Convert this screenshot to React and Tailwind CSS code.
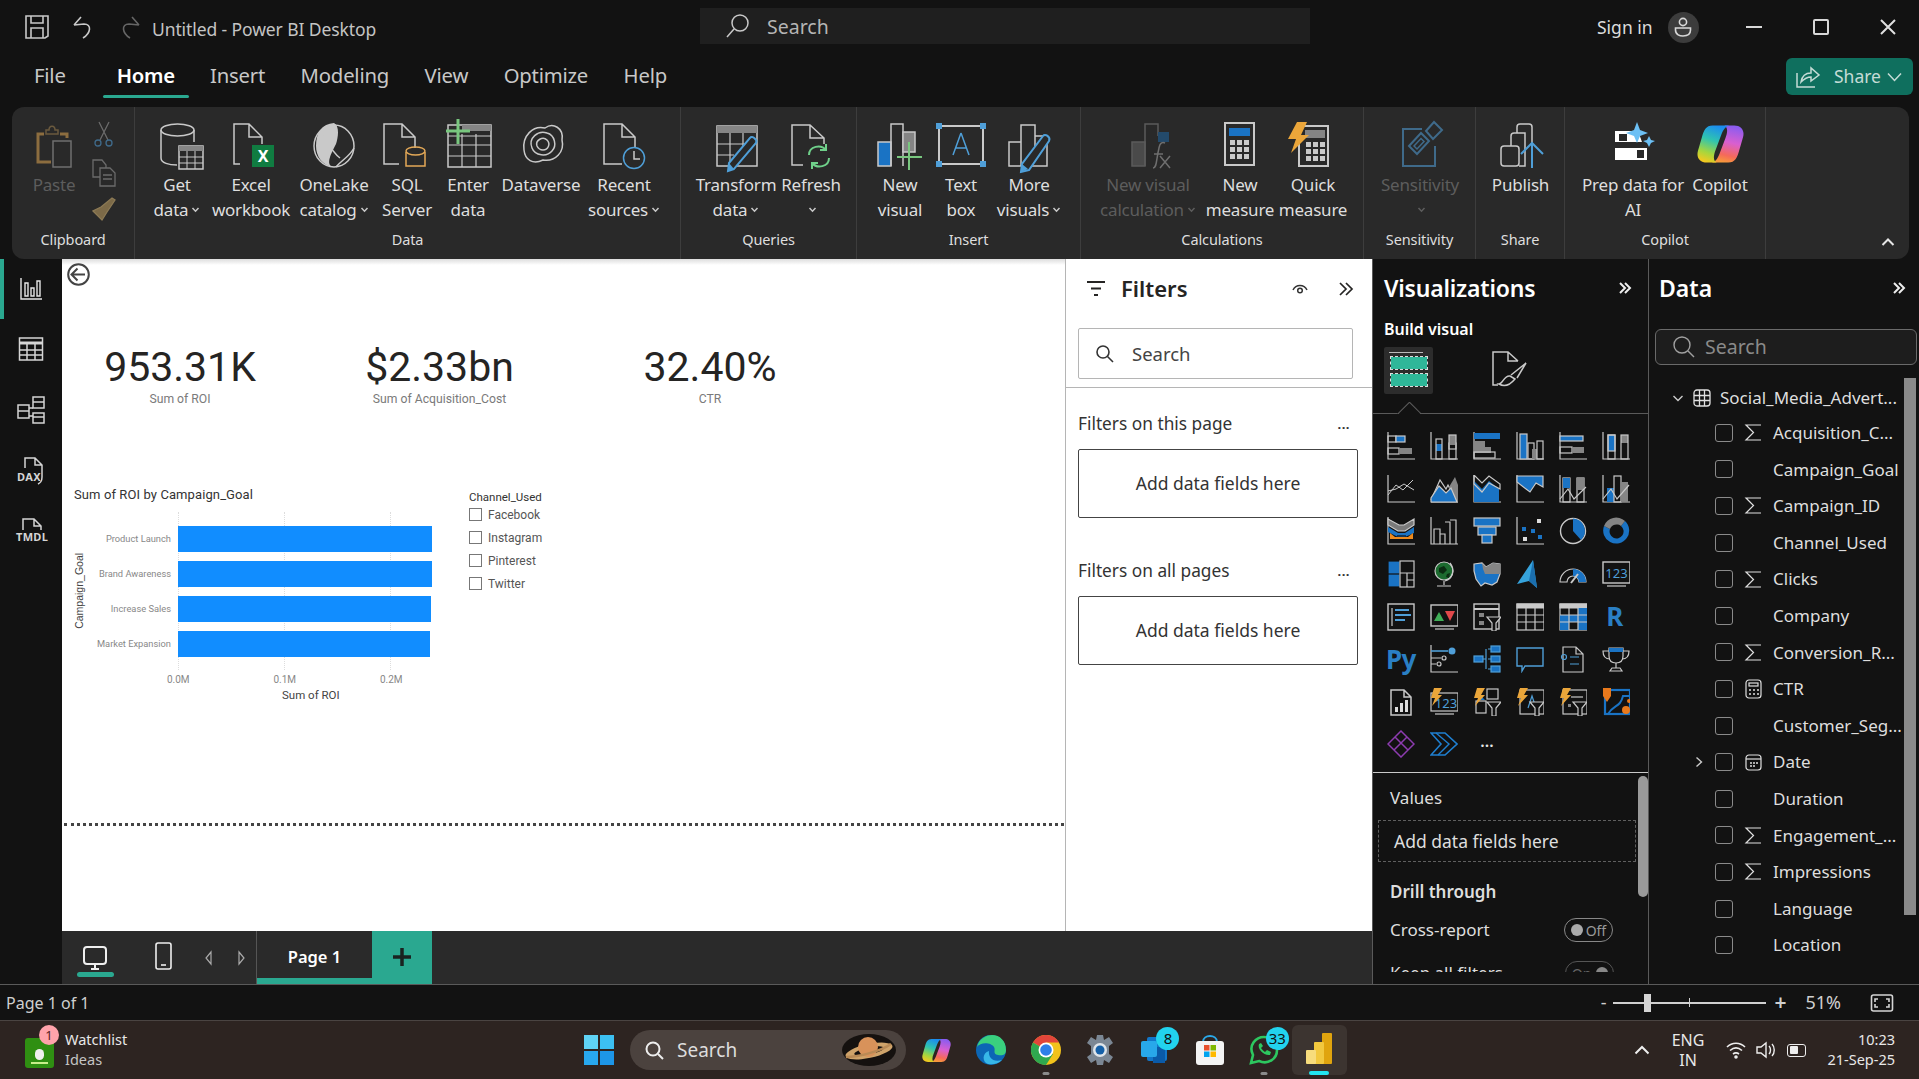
const W = "#c9c9c9";
const B = "#1a73c4";
const G = "#858585";
const L = "#4f9fd8";

function Ico({ s = 44, vb, children, sw = 1.5, stroke = W, className = "" }) {
  return (
    <svg width={s} height={s} viewBox={vb || `0 0 ${s} ${s}`} fill="none" stroke={stroke} strokeWidth={sw} className={"overflow-visible shrink-0 " + className}>
      {children}
    </svg>
  );
}

function Chev({ color = "#c9c9c9", s = 9 }) {
  return (
    <svg width={s} height={s} viewBox="0 0 9 9" fill="none" stroke={color} strokeWidth="1.5" className="inline-block ml-[3px] shrink-0">
      <path d="M1.5 3 4.5 6.2 7.5 3" />
    </svg>
  );
}

function CopilotLogo({ id, w = 47, h = 40 }) {
  return (
    <svg width={w} height={h} viewBox="0 0 48 40" className="shrink-0">
      <defs>
        <linearGradient id={id + "a"} x1="0.6" y1="0" x2="0.3" y2="1">
          <stop offset="0" stopColor="#1b8cf0" />
          <stop offset="0.4" stopColor="#2fc4b0" />
          <stop offset="0.75" stopColor="#a6d63e" />
          <stop offset="1" stopColor="#f5c91f" />
        </linearGradient>
        <linearGradient id={id + "b"} x1="0.6" y1="0" x2="0.4" y2="1">
          <stop offset="0" stopColor="#8a5cf0" />
          <stop offset="0.45" stopColor="#d95fd0" />
          <stop offset="0.8" stopColor="#f56a5a" />
          <stop offset="1" stopColor="#f79a3a" />
        </linearGradient>
      </defs>
      <path fill={`url(#${id}b)`} d="M32 39C39 39 41 34 43 27L47 13C49 6 45 1 38 1H28C32 3 31 9 29 14L23 30C21 35 19 38 15 39Z" />
      <path fill={`url(#${id}a)`} d="M16 1C9 1 7 6 5 13L1 27C-1 34 3 39 10 39H20C16 37 17 31 19 26L25 10C27 5 29 2 33 1Z" />
    </svg>
  );
}

const RI = {
  paste: (
    <Ico stroke="#8c6d3f" sw={3}>
      <path d="M19 40H6V12H12 M28 12H35V16" />
      <path d="M14 12V8H17C17 3 23 3 23 8H26V12Z" stroke="#6b5a3e" strokeWidth="1.5" />
      <rect x="21" y="19" width="18" height="26" stroke="#6f6f6f" strokeWidth="1.5" />
    </Ico>
  ),
  getdata: (
    <Ico>
      <path d="M6 8V36C6 41 14 43 22 43 M39 8V20" />
      <ellipse cx="22.5" cy="8" rx="16.5" ry="6" />
      <rect x="24" y="24" width="24" height="23" fill="#292929" />
      <rect x="24" y="24" width="24" height="5" fill={G} stroke="none" />
      <path d="M24 35H48M24 41H48M32 29V47M40 29V47" strokeWidth="1" />
    </Ico>
  ),
  excel: (
    <Ico>
      <path d="M11 42H5V2H20L33 15V22 M20 2V15H33" />
      <rect x="23" y="23" width="22" height="22" fill="#107c41" stroke="none" />
      <text x="34" y="40" textAnchor="middle" fontSize="16" fontWeight="700" fill="#fff" stroke="none">X</text>
    </Ico>
  ),
  onelake: (
    <Ico>
      <ellipse cx="22" cy="24" rx="20" ry="21" fill="#292929" />
      <path d="M4 24C4 10 10 2 22 1C28 4 26 16 24 22C20 30 12 44 22 45C10 44 4 34 4 24Z" fill="#c9c9c9" stroke="none" />
      <path d="M10 12C14 18 20 30 28 36 M42 26C38 34 30 38 24 45" />
    </Ico>
  ),
  sql: (
    <Ico>
      <path d="M14 42H-1V2H17L30 15V26 M17 2V15H30" />
      <path d="M21 30V44H40V30" stroke="#e3a857" />
      <ellipse cx="30.5" cy="29" rx="9.5" ry="4" stroke="#e3a857" />
    </Ico>
  ),
  enter: (
    <Ico>
      <rect x="2" y="3" width="43" height="42" />
      <rect x="16" y="3" width="29" height="6" fill={G} stroke="none" />
      <path d="M2 23H45M2 34H45M16 12V45M30 12V45M2 14H45" strokeWidth="1.2" />
      <path d="M12 -3V22M0 9H24" stroke="#79c77f" strokeWidth="3" />
    </Ico>
  ),
  dataverse: (
    <Ico>
      <path d="M5 28C3 14 14 3 26 6C34 0 45 6 43 18C46 30 36 40 24 38C14 43 6 38 5 28Z" />
      <path d="M13 26C9 16 19 8 28 11C36 13 38 24 33 29C28 35 16 34 13 26Z" />
      <path d="M18 24C16 18 24 14 28 18C32 22 29 28 24 28C21 28 19 26 18 24Z" />
    </Ico>
  ),
  recent: (
    <Ico>
      <path d="M20 42H2V2H20L33 15V26 M20 2V15H33" />
      <circle cx="32" cy="36" r="10.5" stroke={L} fill="#292929" />
      <path d="M32 29V37H38" />
    </Ico>
  ),
  transform: (
    <Ico>
      <rect x="3" y="4" width="40" height="40" />
      <rect x="3" y="4" width="40" height="7" fill={G} stroke="none" />
      <path d="M3 22H32M3 33H20M16 11V44M29 11V24" strokeWidth="1.2" />
      <path d="M20 47 14 49 15 41 36 16C38 13 44 18 42 21Z" fill="#292929" stroke={L} strokeWidth="2" />
      <path d="M14 49 15 41 20 47Z" fill={L} stroke="none" />
    </Ico>
  ),
  refresh: (
    <Ico>
      <path d="M14 43H3V3H21L35 16V22 M21 3V16H35" />
      <path d="M20 33C20 24 32 22 37 28 M40 36C40 45 28 47 23 41 M37 22V28H31 M23 47V41H29" stroke="#6fd08a" strokeWidth="2" />
    </Ico>
  ),
  newvisual: (
    <Ico>
      <rect x="0" y="20" width="13" height="24" fill={B} stroke="#c9c9c9" />
      <path d="M13 44V2H25V44" />
      <rect x="25" y="10" width="12" height="20" fill={G} stroke="#c9c9c9" />
      <path d="M31 20V48M19 35H44" stroke="#79c77f" strokeWidth="2" />
    </Ico>
  ),
  textbox: (
    <Ico>
      <rect x="0" y="4" width="44" height="38" strokeWidth="2" />
      <path d="M22 11 14 33M22 11 30 33M17 26H27" stroke={L} />
      <g fill={L} stroke="none">
        <rect x="-3" y="1" width="6" height="6" /><rect x="41" y="1" width="6" height="6" /><rect x="-3" y="39" width="6" height="6" /><rect x="41" y="39" width="6" height="6" />
      </g>
    </Ico>
  ),
  more: (
    <Ico>
      <path d="M14 20H2V44H40V14H28 M14 44V3H28V30" />
      <path d="M22 48 14 50 15 42 36 14C38 11 44 15 42 19Z" fill="#292929" stroke={L} strokeWidth="2" />
      <path d="M14 50 15 42 21 47Z" fill={L} stroke="none" />
    </Ico>
  ),
  nvc: (
    <Ico stroke="#5b5b5b">
      <rect x="6" y="20" width="13" height="24" fill="#4a4a4a" />
      <path d="M19 44V2H32V14" />
      <rect x="32" y="10" width="11" height="10" fill="#234a6b" stroke="none" />
      <path d="M27 46C31 46 30 38 33 26C34 20 37 20 39 21M28 32H37M34 34 44 46M44 34 34 46" stroke="#6f6f6f" />
    </Ico>
  ),
  measure: (
    <Ico sw={2}>
      <rect x="7" y="1" width="29" height="42" />
      <rect x="11" y="6" width="21" height="8" fill={B} stroke="none" />
      <g fill="#c9c9c9" stroke="none">
        {[12, 19, 26].flatMap((x) => [18, 25, 32].map((y) => <rect key={x + "-" + y} x={x} y={y} width="5" height="5" />))}
      </g>
    </Ico>
  ),
  quick: (
    <Ico sw={2}>
      <rect x="8" y="4" width="29" height="40" />
      <rect x="14" y="8" width="20" height="8" fill={G} stroke="none" />
      <g fill="#c9c9c9" stroke="none">
        {[15, 22, 29].flatMap((x) => [20, 27, 34].map((y) => <rect key={x + "-" + y} x={x} y={y} width="5" height="5" />))}
      </g>
      <path d="M6 0H16L10 13H18L0 31 5 17H-3Z" fill="#eba63a" stroke="none" />
    </Ico>
  ),
  sens: (
    <Ico stroke="#3f6a8a" sw={2}>
      <path d="M24 7H5V44H37V24" />
      <path d="M11 24 23 11 31 19 19 32Z" />
      <path d="M16 24 23 16.5 26 19.5 19 27Z" strokeWidth="1.5" />
      <path d="M28 9 36 0 44 8 35 17Z" />
    </Ico>
  ),
  publish: (
    <Ico>
      <rect x="2" y="24" width="18" height="20" rx="3" />
      <path d="M12 24V14C12 12 13 11 15 11H26V44H20" />
      <path d="M18 11V5C18 3 19 2 21 2H30C32 2 33 3 33 5V22" />
      <path d="M33 46V22M22 32 33 21 44 32" stroke={L} strokeWidth="2" />
    </Ico>
  ),
  prep: (
    <Ico stroke="none">
      <path d="M4 9H27L31 20H4Z" fill="#fff" />
      <rect x="8" y="12" width="8" height="7" fill="#292929" />
      <rect x="4" y="26" width="32" height="12" fill="#fff" />
      <rect x="26" y="28" width="7" height="8" fill="#292929" />
      <path d="M26 0 29 8 37 11 29 14 26 21 23 14 15 11 23 8Z" fill="#6cc0f5" />
      <path d="M38 14 40 18 44 19 40 21 38 25 36 21 32 19 36 18Z" fill="#6cc0f5" />
    </Ico>
  ),
};

function RBtn({ w, icon, lines, chev, dim }) {
  const text = dim ? "text-[#5d5d5d]" : "text-[#dedede]";
  return (
    <div className={w + " flex flex-col items-center shrink-0"}>
      <div className="h-[44px] flex items-center justify-center w-[44px]">{icon}</div>
      <div className={"mt-[7px] flex flex-col items-center whitespace-nowrap text-[17px] leading-[24.5px] tracking-[-0.2px] " + text}>
        <span>{lines[0]}</span>
        <span className="flex items-center h-[24.5px]">
          {lines[1]}
          {chev && <Chev color={dim ? "#5d5d5d" : "#c9c9c9"} />}
        </span>
      </div>
    </div>
  );
}

function RGroup({ w, pl, label, sep = true, children }) {
  return (
    <div className={w + " shrink-0 h-full flex flex-col pt-[15px] relative " + (sep ? "border-r border-[#3d3d3d]" : "")}>
      <div className={pl + " flex flex-1"}>{children}</div>
      <div className="text-center text-[14.5px] leading-[20px] text-[#dedede] pb-[10px] tracking-[-0.1px]">{label}</div>
    </div>
  );
}

function Ribbon() {
  return (
    <div className="ml-[12px] w-[1897px] h-[152px] bg-[#292929] rounded-xl flex relative shrink-0">
      <RGroup w="w-[123px]" pl="pl-[12px]" label="Clipboard">
        <RBtn w="w-[60px]" icon={RI.paste} lines={["Paste", ""]} dim />
        <div className="w-[40px] flex flex-col items-center gap-[14px]">
          <Ico s={24} sw={1.3} stroke="#6b6b6b">
            <path d="M7 0 16 18M17 0 8 18" />
            <circle cx="6" cy="21" r="3" stroke="#3f6a8a" />
            <circle cx="17" cy="21" r="3" stroke="#3f6a8a" />
          </Ico>
          <Ico s={24} sw={1.3} stroke="#6b6b6b">
            <path d="M8 17H1V0H10L14 5V8" />
            <path d="M8 8H18L23 13V26H8ZM11 15H20M11 19H20" />
          </Ico>
          <Ico s={24} sw={1.3} stroke="#8c7a55">
            <path d="M1 13 10 22 15 14 23 2 20 0 9 9Z" fill="#7c6a48" />
          </Ico>
        </div>
      </RGroup>
      <RGroup w="w-[546px]" pl="pl-[7px]" label="Data">
        <RBtn w="w-[70px]" icon={RI.getdata} lines={["Get", "data"]} chev />
        <RBtn w="w-[78px]" icon={RI.excel} lines={["Excel", "workbook"]} />
        <RBtn w="w-[88px]" icon={RI.onelake} lines={["OneLake", "catalog"]} chev />
        <RBtn w="w-[58px]" icon={RI.sql} lines={["SQL", "Server"]} />
        <RBtn w="w-[64px]" icon={RI.enter} lines={["Enter", "data"]} />
        <RBtn w="w-[82px]" icon={RI.dataverse} lines={["Dataverse", ""]} />
        <RBtn w="w-[84px]" icon={RI.recent} lines={["Recent", "sources"]} chev />
      </RGroup>
      <RGroup w="w-[176px]" pl="pl-[10px]" label="Queries">
        <RBtn w="w-[90px]" icon={RI.transform} lines={["Transform", "data"]} chev />
        <RBtn w="w-[60px]" icon={RI.refresh} lines={["Refresh", ""]} chev />
      </RGroup>
      <RGroup w="w-[224px]" pl="pl-[13px]" label="Insert">
        <RBtn w="w-[60px]" icon={RI.newvisual} lines={["New", "visual"]} />
        <RBtn w="w-[62px]" icon={RI.textbox} lines={["Text", "box"]} />
        <RBtn w="w-[74px]" icon={RI.more} lines={["More", "visuals"]} chev />
      </RGroup>
      <RGroup w="w-[283px]" pl="pl-[13px]" label="Calculations">
        <RBtn w="w-[108px]" icon={RI.nvc} lines={["New visual", "calculation"]} chev dim />
        <RBtn w="w-[76px]" icon={RI.measure} lines={["New", "measure"]} />
        <RBtn w="w-[70px]" icon={RI.quick} lines={["Quick", "measure"]} />
      </RGroup>
      <RGroup w="w-[112px]" pl="pl-0" label="Sensitivity">
        <RBtn w="w-[112px]" icon={RI.sens} lines={["Sensitivity", ""]} chev dim />
      </RGroup>
      <RGroup w="w-[89px]" pl="pl-0" label="Share">
        <RBtn w="w-[89px]" icon={RI.publish} lines={["Publish", ""]} />
      </RGroup>
      <RGroup w="w-[201px]" pl="pl-[10px]" label="Copilot">
        <RBtn w="w-[116px]" icon={RI.prep} lines={["Prep data for", "AI"]} />
        <RBtn w="w-[58px]" icon={<CopilotLogo id="cpa" />} lines={["Copilot", ""]} />
      </RGroup>
      <div className="flex-1 flex justify-end items-end pb-[12px] pr-[14px]">
        <svg width="14" height="10" viewBox="0 0 14 10" fill="none" stroke="#e5e5e5" strokeWidth="2">
          <path d="M1.5 8 7 2.5 12.5 8" />
        </svg>
      </div>
    </div>
  );
}

function TitleBar() {
  return (
    <div className="h-[54px] flex items-center shrink-0 relative">
      <div className="w-[700px] flex items-center shrink-0 pl-[25px]">
        <Ico s={24} sw={1.6}>
          <path d="M1 1H23V21L20 23H1Z M6 1V8H18V1 M6 23V13H18V23" />
        </Ico>
        <Ico s={24} sw={1.6} className="ml-[23px]">
          <path d="M2 10 9 2M2 10 12 9C20 9 19 18 11 23" />
        </Ico>
        <Ico s={24} sw={1.6} stroke="#666" className="ml-[21px]">
          <path d="M22 10 15 2M22 10 12 9C4 9 5 18 13 23" />
        </Ico>
        <span className="ml-[11px] mt-[5px] text-[17.5px] text-[#c4c4c4] tracking-[-0.1px]">Untitled - Power BI Desktop</span>
      </div>
      <div className="w-[610px] h-[36px] bg-[#1f1f1f] flex items-center pl-[26px] shrink-0 mb-[2px]">
        <Ico s={24} sw={1.5}>
          <circle cx="14" cy="9" r="8" />
          <path d="M8 15 1 23" />
        </Ico>
        <span className="ml-[17px] mt-[1px] text-[19.5px] text-[#b5b5b5]">Search</span>
      </div>
      <div className="flex-1 flex items-center">
        <span className="ml-[287px] text-[17.5px] text-[#dcdcdc]">Sign in</span>
        <div className="ml-[15px] w-[31px] h-[31px] rounded-full bg-[#3c3c3c] flex items-center justify-center">
          <Ico s={20} sw={1.6} stroke="#d8d8d8">
            <circle cx="10" cy="5" r="3.6" />
            <path d="M2.5 11H17.5V13C17.5 18 13 19 10 19C7 19 2.5 18 2.5 13Z" />
          </Ico>
        </div>
        <div className="ml-[47px] w-[16px] h-[2px] bg-[#d8d8d8]" />
        <div className="ml-[51px] w-[16px] h-[16px] border-2 border-[#d8d8d8] rounded-[2px]" />
        <Ico s={16} sw={2} stroke="#e0e0e0" className="ml-[51px]">
          <path d="M1 1 15 15M15 1 1 15" />
        </Ico>
      </div>
    </div>
  );
}

function TabsBar() {
  const tabs = ["Insert", "Modeling", "View", "Optimize", "Help"];
  return (
    <div className="h-[53px] flex items-start shrink-0 relative">
      <div className="flex items-center h-[43px] text-[20.3px] text-[#c8c8c8] pl-[34px] tracking-[-0.2px]">
        <span>File</span>
        <div className="ml-[37px] mr-[21px] relative h-full flex items-center px-[14px] font-semibold text-white">
          Home
          <div className="absolute left-0 right-0 bottom-[-1px] h-[3px] bg-[#2aa890] rounded-full" />
        </div>
        <div className="flex gap-[35.5px]">
          {tabs.map((t) => (
            <span key={t}>{t}</span>
          ))}
        </div>
      </div>
      <div className="ml-auto mr-[6px] mt-[4px] w-[127px] h-[37px] bg-[#0f6f5e] rounded-md flex items-center pl-[10px] text-[#c5dcd6]">
        <Ico s={24} sw={1.5} stroke="#c5dcd6">
          <path d="M1 8V22H19 M5 17C6 11 10 8 15 8V3L23 10 15 16V12C11 12 8 14 5 17Z" />
        </Ico>
        <span className="ml-[14px] text-[17.5px]">Share</span>
        <svg width="15" height="10" viewBox="0 0 15 10" fill="none" stroke="#c5dcd6" strokeWidth="1.5" className="ml-[6px]">
          <path d="M1 1.5 7.5 8.5 14 1.5" />
        </svg>
      </div>
    </div>
  );
}

function NavRail() {
  return (
    <div className="w-[62px] shrink-0 bg-[#121212] relative flex flex-col items-stretch">
      <div className="absolute left-0 top-0 w-[4px] h-[60px] bg-[#2aa890]" />
      <div className="h-[60px] flex items-center justify-center">
        <Ico s={22} sw={1.4} stroke="#e5e5e5">
          <path d="M1 0V21H22M5 5H8V18H5ZM11 10H14V18H11ZM17 3H20V18H17Z" />
        </Ico>
      </div>
      <div className="h-[60px] flex items-center justify-center">
        <Ico s={24} sw={1.5} stroke="#d5d5d5">
          <rect x="0.5" y="1" width="23" height="22" />
          <path d="M.5 6H23.5" strokeWidth="3" />
          <path d="M.5 13H23.5M.5 18H23.5M8 6V23M16 6V23" />
        </Ico>
      </div>
      <div className="h-[61px] flex items-center justify-center">
        <Ico s={28} sw={1.5} stroke="#d5d5d5">
          <rect x="1" y="9" width="11" height="13" />
          <path d="M1 15H12" />
          <rect x="16" y="1" width="11" height="11" />
          <path d="M16 6H27" />
          <rect x="16" y="17" width="11" height="10" />
          <path d="M16 21H27M12 12H16M12 20H16" />
        </Ico>
      </div>
      <div className="h-[61px] flex items-center justify-center">
        <div className="relative w-[28px] h-[28px]">
          <Ico s={28} sw={1.5} stroke="#d5d5d5">
            <path d="M8 11V1H18L25 8V20C25 25 23 26 21 27M18 1V8H25" />
          </Ico>
          <span className="absolute left-0 top-[14px] text-[11px] leading-[12px] font-bold text-[#d5d5d5] tracking-[0.4px]">DAX</span>
        </div>
      </div>
      <div className="h-[61px] flex items-center justify-center">
        <div className="relative w-[28px] h-[28px]">
          <Ico s={28} sw={1.5} stroke="#d5d5d5">
            <path d="M6 12V1H17L24 8V12M17 1V8H24" />
          </Ico>
          <span className="absolute -left-[1px] top-[13px] text-[11px] leading-[12px] font-bold text-[#d5d5d5] tracking-[0.3px]">TMDL</span>
        </div>
      </div>
    </div>
  );
}

function Kpi({ w, value, label }) {
  return (
    <div className={w + " flex flex-col items-center shrink-0"}>
      <div className="font-['Roboto',sans-serif] text-[41px] leading-[48px] text-[#252423]">{value}</div>
      <div className="font-['Roboto',sans-serif] text-[12.2px] leading-[16px] text-[#7a7a7a] whitespace-nowrap">{label}</div>
    </div>
  );
}

const bars = [
  { label: "Product Launch", w: "w-[254px]" },
  { label: "Brand Awareness", w: "w-[253.5px]" },
  { label: "Increase Sales", w: "w-[253px]" },
  { label: "Market Expansion", w: "w-[252px]" },
];

function BarChart() {
  return (
    <div className="w-[395px] shrink-0 flex flex-col font-['Roboto',sans-serif]">
      <div className="text-[13px] leading-[16px] text-[#333] pl-[12px] tracking-[0.1px]">Sum of ROI by Campaign_Goal</div>
      <div className="flex mt-[9px] relative">
        <div className="w-[24px] pl-[12px] flex items-center justify-center h-[158px]">
          <span className="-rotate-90 whitespace-nowrap text-[10.5px] text-[#444] font-['Liberation_Sans',sans-serif]">Campaign_Goal</span>
        </div>
        <div className="w-[85px] flex flex-col pt-[14px] gap-[9px] items-end shrink-0 pr-[7px] ml-[7px]">
          {bars.map((b) => (
            <div key={b.label} className="h-[26px] flex items-center text-[9.3px] text-[#888] whitespace-nowrap">{b.label}</div>
          ))}
        </div>
        <div className="relative w-[258px] h-[158px] flex flex-col pt-[14px] gap-[9px]">
          <div className="absolute inset-y-0 left-0 w-[213px] flex justify-between">
            <div className="border-l border-dotted border-[#ddd]" />
            <div className="border-l border-dotted border-[#ddd]" />
            <div className="border-l border-dotted border-[#ddd]" />
          </div>
          {bars.map((b) => (
            <div key={b.label} className={b.w + " h-[26px] bg-[#118dff] relative"} />
          ))}
        </div>
      </div>
      <div className="ml-[63px] mt-[3px] flex text-[10px] leading-[14px] text-[#888]">
        <span className="w-[106.5px] text-center">0.0M</span>
        <span className="w-[106.5px] text-center">0.1M</span>
        <span className="w-[106.5px] text-center">0.2M</span>
      </div>
      <div className="text-[11.5px] leading-[14px] mt-[1px] text-[#444] pl-[220px] whitespace-nowrap">Sum of ROI</div>
    </div>
  );
}

function Slicer() {
  const items = ["Facebook", "Instagram", "Pinterest", "Twitter"];
  return (
    <div className="font-['Roboto',sans-serif] pt-[3px] ml-[12px]">
      <div className="text-[11.5px] leading-[14px] text-[#333]">Channel_Used</div>
      <div className="flex flex-col gap-[9.5px] mt-[4px]">
        {items.map((i) => (
          <div key={i} className="flex items-center h-[13.5px] text-[12px] text-[#555]">
            <div className="w-[13px] h-[13px] border border-[#777] mr-[6px]" />
            {i}
          </div>
        ))}
      </div>
    </div>
  );
}

function Canvas() {
  return (
    <div className="flex-1 bg-white flex flex-col relative min-w-0">
      <div className="h-[6px] -mb-[6px] bg-gradient-to-b from-[#ddd] to-white" />
      <Ico s={23} sw={2} stroke="#444" className="ml-[4.5px] mt-[4px]">
        <circle cx="11.5" cy="11.5" r="10.3" />
        <path d="M18 11.5H5M10.5 5.5 4.5 11.5 10.5 17.5" />
      </Ico>
      <div className="flex mt-[57px] pl-[14px]">
        <Kpi w="w-[208px]" value="953.31K" label="Sum of ROI" />
        <Kpi w="w-[311px]" value="$2.33bn" label="Sum of Acquisition_Cost" />
        <Kpi w="w-[230px]" value="32.40%" label="CTR" />
      </div>
      <div className="flex mt-[80px]">
        <BarChart />
        <Slicer />
      </div>
      <div className="absolute left-[2px] right-[1px] top-[564px] border-t-[3px] border-dotted border-[#444]" />
    </div>
  );
}

function FilterBox({ label }) {
  return (
    <div className="w-[280px] h-[69px] border border-[#444] rounded-[2px] flex items-center justify-center text-[17.5px] text-[#333]">{label}</div>
  );
}

function FiltersPanel() {
  return (
    <div className="w-[307px] shrink-0 bg-white border-l border-[#b5b5b5] text-[#252423] flex flex-col">
      <div className="flex items-center h-[58px] pl-[20px] pt-[1px]">
        <Ico s={20} sw={2.2} stroke="#252423">
          <path d="M1 3H19M5 9.5H15M8 16H12" />
        </Ico>
        <span className="ml-[15px] text-[22px] font-semibold">Filters</span>
        <Ico s={16} sw={1.5} stroke="#333" className="ml-[105px]">
          <path d="M1 9C4 3 12 3 15 9" />
          <circle cx="8" cy="9.5" r="2.3" />
        </Ico>
        <Ico s={16} sw={1.7} stroke="#252423" className="ml-[30px]">
          <path d="M2 2 8 8 2 14M8 2 14 8 8 14" />
        </Ico>
      </div>
      <div className="ml-[12px] w-[275px] h-[51px] mt-[11px] border border-[#b5b5b5] rounded-[2px] flex items-center pl-[17px]">
        <Ico s={18} sw={1.6} stroke="#333">
          <circle cx="7" cy="7" r="6" />
          <path d="M11.5 11.5 17 17" />
        </Ico>
        <span className="ml-[18px] text-[18.5px] text-[#444]">Search</span>
      </div>
      <div className="mt-[8px] border-t border-[#b5b5b5]" />
      <div className="px-[12px]">
        <div className="flex items-center h-[24px] mt-[24px] mb-[13px] text-[17.3px] text-[#333] w-[280px]">
          Filters on this page
          <span className="ml-auto mr-[8px] font-bold text-[13px] tracking-[0.5px] mt-[2px]">...</span>
        </div>
        <FilterBox label="Add data fields here" />
        <div className="flex items-center h-[24px] mt-[41px] mb-[13px] text-[17.3px] text-[#333] w-[280px]">
          Filters on all pages
          <span className="ml-auto mr-[8px] font-bold text-[13px] tracking-[0.5px] mt-[2px]">...</span>
        </div>
        <FilterBox label="Add data fields here" />
      </div>
    </div>
  );
}

function PageTabs() {
  return (
    <div className="h-[53px] shrink-0 bg-[#2a2a2a] flex items-stretch">
      <div className="w-[195px] flex items-center relative pl-[21px] border-r border-[#555] shrink-0">
        <Ico s={24} sw={2} stroke="#eee">
          <rect x="1" y="1" width="22" height="17" rx="3" />
          <path d="M8 23H16M12 18V23" />
        </Ico>
        <div className="absolute left-[15px] bottom-[7px] w-[37px] h-[5px] rounded-full bg-[#2aa890]" />
        <Ico s={24} sw={1.6} stroke="#eee" className="ml-[44px] -mt-[3px]">
          <rect x="5" y="-1" width="15" height="26" rx="2" />
          <path d="M10 21H15" />
        </Ico>
        <Ico s={12} sw={1.2} stroke="#aaa" className="ml-[28px]">
          <path d="M8 0 3 6 8 12Z" />
        </Ico>
        <Ico s={12} sw={1.2} stroke="#aaa" className="ml-[21px]">
          <path d="M3 0 8 6 3 12Z" />
        </Ico>
      </div>
      <div className="w-[115px] border-b-[6px] border-[#2aa890] flex items-center justify-center text-[16.5px] font-semibold text-white pt-[6px] shrink-0">Page 1</div>
      <div className="w-[60px] bg-[#2aa890] flex items-center justify-center pb-[2px] shrink-0">
        <svg width="18" height="18" viewBox="0 0 18 18" fill="none" stroke="#1a2320" strokeWidth="3.5">
          <path d="M9 0V18M0 9H18" />
        </svg>
      </div>
    </div>
  );
}

function V({ children }) {
  return (
    <svg width="28" height="28" viewBox="0 0 28 28" fill="none" stroke={W} strokeWidth="1.2">
      {children}
    </svg>
  );
}

const AX = <path d="M1 0V27H28" />;
const bolt = <path d="M4 0H12L8 7H12L2 18 5 10H1Z" fill="#eba63a" stroke="none" />;
const funnel = <path d="M14 14H28L23 20V28H19V20Z" fill="#121212" />;

const VIZ = [
  <V>{AX}<rect x="1" y="4" width="8" height="6" /><rect x="9" y="4" width="9" height="6" fill={B} stroke={W} /><rect x="1" y="16" width="11" height="6" /><rect x="12" y="16" width="13" height="6" fill={G} stroke="none" /></V>,
  <V>{AX}<rect x="6" y="12" width="6" height="7" fill={B} stroke="none" /><rect x="6" y="7" width="6" height="20" /><rect x="19" y="11" width="7" height="6" /><rect x="19" y="3" width="7" height="10" fill={G} stroke="none" /><rect x="19" y="3" width="7" height="24" /></V>,
  <V>{AX}<rect x="1" y="1" width="26" height="6" fill={B} stroke="none" /><rect x="1" y="9" width="11" height="6" fill={G} stroke="none" /><rect x="1" y="15" width="17" height="6" fill={G} stroke="none" /><rect x="1" y="20" width="21" height="6" /></V>,
  <V>{AX}<rect x="4" y="2" width="7" height="25" fill={B} stroke={W} /><rect x="12" y="11" width="6" height="16" /><rect x="16" y="17" width="5" height="10" fill={G} stroke="none" /><rect x="21" y="9" width="6" height="18" /></V>,
  <V>{AX}<rect x="1" y="4" width="23" height="5" fill={B} stroke={W} /><rect x="1" y="15" width="12" height="6" /><rect x="13" y="15" width="12" height="6" fill={G} stroke="none" /></V>,
  <V>{AX}<rect x="6" y="3" width="7" height="16" fill={B} stroke={W} /><rect x="6" y="3" width="7" height="24" /><rect x="19" y="3" width="7" height="8" fill={G} stroke="none" /><rect x="19" y="3" width="7" height="24" /></V>,

  <V>{AX}<path d="M1 20 9 10 16 15 26 5M1 16 9 14 17 9 27 15" strokeWidth="1" /></V>,
  <V><path d="M1 27H28" /><path d="M1 25 10 5 16 14 18 10 25 24" /><path d="M19 12 25 2 28 10V27H20Z" fill={G} stroke="none" /><path d="M1 27V23L9 11 16 18 21 13 27 27Z" fill={B} stroke={W} /></V>,
  <V>{AX}<path d="M1 6 9 14 16 6 26 14V27H1Z" fill={B} stroke="none" /><path d="M1 0 9 8 16 1 27 9V14L16 8 9 17 1 9Z" /></V>,
  <V>{AX}<path d="M1 1H27V12L20 8 14 17 1 7Z" fill={B} stroke={W} /></V>,
  <V>{AX}<rect x="4" y="3" width="7" height="24" /><rect x="4" y="3" width="7" height="10" fill={B} stroke="none" /><rect x="18" y="3" width="7" height="24" /><rect x="18" y="3" width="7" height="12" fill={G} stroke="none" /><path d="M1 24 9 14 15 24 27 12" /></V>,
  <V>{AX}<rect x="5" y="13" width="7" height="14" fill={B} stroke="none" /><rect x="12" y="1" width="7" height="26" /><rect x="19" y="7" width="7" height="20" fill={G} stroke="none" /><path d="M1 24 9 14 15 24 27 10" /></V>,

  <V>{AX}<path d="M1 2 12 8H17L27 2V8L18 14H11L1 8Z" fill="#7a7a7a" stroke={W} /><path d="M1 10 11 16H18L27 10V16L18 20H11L1 15Z" fill={B} stroke="none" /><path d="M3 16 8 20H21L26 16V22H3Z" fill="#eb8a1e" stroke="none" /><path d="M10 19H19" stroke="#121212" /></V>,
  <V>{AX}<path d="M4 27V12H10V27M10 17H15V27M15 5H20V27M20 3H26V27" /></V>,
  <V><rect x="1" y="1" width="26" height="8" fill={B} stroke={W} /><rect x="5" y="10" width="18" height="8" fill={B} stroke={W} /><rect x="9" y="18" width="10" height="8" fill={B} stroke={W} /></V>,
  <V>{AX}<rect x="6" y="10" width="4" height="4" fill={B} stroke="none" /><rect x="15" y="12" width="4" height="4" fill={B} stroke="none" /><rect x="22" y="18" width="4" height="4" fill={B} stroke="none" /><rect x="21" y="2" width="4" height="4" fill="#ddd" stroke="none" /><rect x="7" y="20" width="4" height="4" fill="#ddd" stroke="none" /></V>,
  <V><circle cx="14" cy="14" r="12.5" strokeWidth="1.4" /><path d="M14 1.5A12.5 12.5 0 0 1 22 23L14 14Z" fill={B} stroke="none" /></V>,
  <V><path d="M23 4A13 13 0 1 1 2 9L8 12A7 7 0 1 0 19 9Z" fill={B} stroke="none" /><path d="M2 9A13 13 0 0 1 23 4L19 9A7 7 0 0 0 8 12Z" fill={G} stroke="none" /></V>,

  <V><rect x="1" y="1" width="12" height="26" fill={B} stroke="#121212" /><path d="M1 14H13" stroke="#121212" /><rect x="13" y="1" width="14" height="26" /><path d="M13 13H27M20 13V27M20 20H27" /></V>,
  <V><circle cx="14" cy="11" r="9" fill="#1c6b2f" stroke={W} /><path d="M9 8 14 6 17 10 13 14 9 12ZM17 14 20 13 19 18 16 17Z" fill="#0b2c12" stroke="none" /><path d="M20 3C25 9 23 19 15 21M14 21V25M7 26H21" /></V>,
  <V><path d="M1 4 9 3 13 7 20 3 27 4V14L24 22 19 25 12 23 8 26 3 19 1 11Z" fill={B} stroke={W} /><path d="M9 3 13 7 20 3 27 4V14H12L10 9Z" fill={G} stroke="none" /></V>,
  <V><path d="M17 0 21 28 13 21 1 24Z" fill="#36a3dc" stroke="none" /><path d="M17 0 13 21 21 28Z" fill="#1b6fae" stroke="none" /></V>,
  <V><path d="M1 22A13 13 0 0 1 27 22H20A6 6 0 0 0 8 22Z" /><path d="M14 9A13 13 0 0 1 27 22H20A6 6 0 0 0 14 16Z" fill={B} stroke="none" /><path d="M12 23 19 14" strokeWidth="2" /></V>,
  <V><rect x="1" y="2" width="27" height="21" strokeWidth="1.4" /><path d="M5 26H24" /><text x="14.5" y="18" textAnchor="middle" fontSize="13" fill={L} stroke="none">123</text></V>,

  <V><rect x="1" y="1" width="26" height="26" strokeWidth="1.4" /><path d="M5 5V23" /><path d="M8 7H22M8 12H24M8 17H18" stroke={L} strokeWidth="2" /></V>,
  <V><rect x="1" y="2" width="27" height="21" strokeWidth="1.4" /><path d="M5 26H24" /><path d="M9 9 14 18H4Z" fill="#3fae57" stroke="none" /><path d="M15 8H25L20 18Z" fill="#e0484a" stroke="none" /></V>,
  <V><rect x="1" y="1" width="25" height="25" strokeWidth="1.4" /><path d="M1 6H26" strokeWidth="2" /><rect x="6" y="10" width="5" height="4" fill={G} stroke="none" /><rect x="6" y="18" width="5" height="4" fill={G} stroke="none" />{funnel}</V>,
  <V><rect x="1" y="1" width="27" height="26" /><path d="M1 1H28V5H1Z" fill={W} /><path d="M1 12H28M1 19H28M10 5V27M19 5V27" /></V>,
  <V><rect x="1" y="1" width="27" height="26" /><path d="M1 1H28V5H1Z" fill={W} /><rect x="19" y="5" width="9" height="22" fill={B} stroke="none" /><rect x="1" y="12" width="18" height="7" fill={B} stroke="none" /><rect x="1" y="19" width="9" height="8" fill={B} stroke="none" /><path d="M1 12H28M1 19H28M10 5V27M19 5V27" /></V>,
  <div className="text-[26px] font-bold text-[#2a7fc4] leading-[28px] -mt-[1px] -ml-[2px]">R</div>,

  <div className="text-[26px] font-bold text-[#2a7fc4] leading-[28px] -ml-[1px] tracking-[-0.5px]">Py</div>,
  <V>{AX}<path d="M1 6H18" stroke={L} strokeWidth="1.6" /><circle cx="22" cy="6" r="3.5" fill={L} stroke="none" /><path d="M1 13H11M1 19H6" /><circle cx="14" cy="13" r="2" /><circle cx="9" cy="19" r="2" /></V>,
  <V><path d="M1 14H9M15 4H27M15 14H19M15 24H27M13 4V24M9 14H13" stroke={L} /><rect x="1" y="11" width="9" height="6" fill={B} stroke={L} /><rect x="18" y="1" width="9" height="6" fill={B} stroke={L} /><rect x="18" y="11" width="9" height="6" fill={B} stroke={L} /><rect x="18" y="21" width="9" height="6" fill={B} stroke={L} /></V>,
  <V><path d="M1 3H27V21H9L6 26V21H1Z" stroke={L} strokeWidth="1.4" /></V>,
  <V><path d="M4 2H17L24 9V27H4Z M17 2V9H24" /><circle cx="5" cy="12" r="2.5" stroke={L} /><path d="M11 12H20M11 19H20" stroke={L} /></V>,
  <V><path d="M7 3H21V11C21 16 18 18 14 18C10 18 7 16 7 11Z" /><rect x="7" y="3" width="14" height="4" fill={B} stroke="none" /><path d="M7 6H1C1 12 4 14 8 14M21 6H27C27 12 24 14 20 14M14 18V23M8 26H20L18 23H10Z" /></V>,

  <V><path d="M4 2H17L24 9V27H4Z M17 2V9H24" strokeWidth="1.5" /><rect x="8" y="19" width="3" height="5" fill="#ddd" stroke="none" /><rect x="13" y="15" width="3" height="9" fill="#ddd" stroke="none" /><rect x="18" y="12" width="3" height="12" fill="#ddd" stroke="none" /></V>,
  <V><rect x="1" y="5" width="27" height="18" /><path d="M5 26H24" /><text x="16" y="20" textAnchor="middle" fontSize="13" fill={L} stroke="none">123</text>{bolt}</V>,
  <V><rect x="14" y="1" width="11" height="10" /><rect x="3" y="13" width="10" height="12" /><path d="M5 5 12 12H5Z" fill={B} stroke="none" />{funnel}{bolt}</V>,
  <V><rect x="4" y="2" width="24" height="24" /><path d="M12 20 16 8 20 20" stroke={L} />{funnel}{bolt}</V>,
  <V><rect x="4" y="2" width="24" height="24" /><path d="M12 9H24" /><rect x="9" y="16" width="3" height="3" fill={G} stroke="none" />{funnel}{bolt}</V>,
  <V><rect x="3" y="2" width="25" height="24" stroke={B} strokeWidth="2.2" /><path d="M6 26C12 16 18 20 21 8H28" stroke={B} strokeWidth="2" /><path d="M1 0H9V8L5 14 1 8Z" fill="#e8791c" stroke="none" /><circle cx="24" cy="22" r="4" fill="#e8791c" stroke="none" /><circle cx="27" cy="13" r="2" fill="#e8791c" stroke="none" /></V>,

  <V><path d="M14 1 27 14 14 27 1 14Z M8 7 21 20M20 7 7 20" stroke="#8d3cb0" strokeWidth="1.5" /></V>,
  <V><path d="M1 3H15L27 14 15 25H1L11 14Z" stroke="#1f7fd0" strokeWidth="1.6" /><path d="M6 3 19 14 8 25" stroke="#1f7fd0" strokeWidth="1.4" /></V>,
  <div className="text-[14px] font-bold text-[#e5e5e5] leading-[20px] text-center tracking-[0.5px] -mt-[5px]">...</div>,
];

function VizPanel() {
  return (
    <div className="w-[276px] shrink-0 bg-[#121212] border-l border-[#5a5a5a] flex flex-col">
      <div className="h-[513px] shrink-0 flex flex-col">
        <div className="flex items-center h-[58px] pl-[11px] pr-[16px] text-[23px] font-semibold text-white tracking-[-0.2px]">
          Visualizations
          <Ico s={14} sw={2} stroke="#eee" className="ml-auto">
            <path d="M2 2 7 7 2 12M7 2 12 7 7 12" />
          </Ico>
        </div>
        <div className="pl-[11px] h-[24px] text-[16px] font-semibold text-white leading-[24px]">Build visual</div>
        <div className="flex items-start pl-[11px] mt-[6px] relative h-[67px] border-b border-[#5a5a5a]">
          <div className="w-[49px] h-[47px] bg-[#2c2c2c] rounded-[2px] flex flex-col pt-[5px] items-center">
            <div className="w-[34px] h-[1px] bg-[#bbb] self-start ml-[5px] mb-[4px]" />
            <div className="w-[36px] h-[12px] bg-[#2fb799] outline-1 outline-dashed outline-[#ddd]" />
            <div className="w-[36px] h-[12px] bg-[#2fb799] outline-1 outline-dashed outline-[#ddd] mt-[5px]" />
          </div>
          <Ico s={38} sw={1.5} className="ml-[57px] mt-[4px]">
            <path d="M8 34H3V1H18L28 10 M18 1V10H28" />
            <path d="M9 33C13 33 14 24 20 25L25 28 C20 34 14 36 9 33ZM21 24 36 12 27 27" />
          </Ico>
          <div className="absolute left-[24px] -bottom-[1px] w-[24px] h-[12px] overflow-hidden">
            <div className="w-[17px] h-[17px] bg-[#121212] border border-[#5a5a5a] rotate-45 mx-auto mt-[3px]" />
          </div>
        </div>
        <div className="grid grid-cols-[repeat(6,42.9px)] auto-rows-[42.6px] pl-[7px] pt-[11px]">
          {VIZ.map((v, i) => (
            <div key={i} className="flex items-center justify-center">{v}</div>
          ))}
        </div>
      </div>
      <div className="border-t border-[#c9c9c9] flex-1 relative flex flex-col pb-[12px] overflow-hidden">
        <div className="flex-1 overflow-hidden relative text-[#dedede] pl-[5px] pr-[11px]">
          <div className="text-[17px] pl-[12px] pt-[13px] leading-[24px]">Values</div>
          <div className="mt-[10px] h-[42px] w-[258px] border border-dashed border-[#5f5f5f] flex items-center pl-[15px] text-[17.5px]">Add data fields here</div>
          <div className="text-[17px] font-semibold pl-[12px] mt-[18px] leading-[24px]">Drill through</div>
          <div className="flex items-center pl-[12px] mt-[14px] h-[24px] text-[17px]">
            Cross-report
            <div className="ml-[74px] w-[49px] h-[24px] rounded-full border border-[#888] flex items-center pl-[6px]">
              <div className="w-[12px] h-[12px] rounded-full bg-[#aaa]" />
              <span className="ml-[3px] text-[14px] text-[#999]">Off</span>
            </div>
          </div>
          <div className="flex items-center pl-[12px] mt-[19px] h-[24px] text-[17px]">
            Keep all filters
            <div className="ml-[62px] w-[49px] h-[24px] rounded-full border border-[#555] flex items-center pl-[6px]">
              <span className="text-[14px] text-[#666]">On</span>
              <div className="ml-[5px] w-[12px] h-[12px] rounded-full bg-[#888]" />
            </div>
          </div>
        </div>
        <div className="absolute right-0 top-[3px] w-[10px] h-[121px] rounded-full bg-[#9a9a9a]" />
      </div>
    </div>
  );
}

const FIELDS = [
  { n: "Acquisition_C...", i: "sum" },
  { n: "Campaign_Goal" },
  { n: "Campaign_ID", i: "sum" },
  { n: "Channel_Used" },
  { n: "Clicks", i: "sum" },
  { n: "Company" },
  { n: "Conversion_R...", i: "sum" },
  { n: "CTR", i: "calc" },
  { n: "Customer_Seg..." },
  { n: "Date", i: "date", exp: true },
  { n: "Duration" },
  { n: "Engagement_...", i: "sum" },
  { n: "Impressions", i: "sum" },
  { n: "Language" },
  { n: "Location" },
];

function FieldIcon({ t }) {
  if (t === "sum")
    return (
      <Ico s={17} sw={1.2} stroke="#e0e0e0">
        <path d="M16 1H1L8.5 8.5 1 16H16" />
      </Ico>
    );
  if (t === "calc")
    return (
      <Ico s={17} sw={1.2} stroke="#e0e0e0">
        <rect x="1" y="0" width="15" height="18" rx="3" />
        <rect x="4" y="3" width="9" height="3" />
        <path d="M4 10H6M8 10H10M12 10H14M4 14H6M8 14H10M12 14H14" strokeWidth="1.6" />
      </Ico>
    );
  if (t === "date")
    return (
      <Ico s={17} sw={1.2} stroke="#e0e0e0">
        <rect x="1" y="1" width="15" height="15" rx="3" />
        <path d="M1 5H16" />
        <path d="M5 9H7M8 9H10M11 9H13M5 12H7M8 12H10" strokeWidth="1.4" />
      </Ico>
    );
  return <div className="w-[17px]" />;
}

function DataPanel() {
  return (
    <div className="flex-1 bg-[#121212] border-l border-[#5a5a5a] flex flex-col min-w-0">
      <div className="flex items-center h-[58px] pl-[10px] pr-[13px] text-[23px] font-semibold text-white">
        Data
        <Ico s={14} sw={2} stroke="#eee" className="ml-auto">
          <path d="M2 2 7 7 2 12M7 2 12 7 7 12" />
        </Ico>
      </div>
      <div className="ml-[6px] mt-[12px] w-[262px] h-[36px] bg-[#1d1d1d] border border-[#6a6a6a] rounded-md flex items-center pl-[17px] shrink-0">
        <Ico s={22} sw={1.4} stroke="#a0a0a0">
          <circle cx="9" cy="9" r="8" />
          <path d="M15 15 21 21" />
        </Ico>
        <span className="ml-[10px] text-[19.5px] text-[#8a8a8a]">Search</span>
      </div>
      <div className="flex-1 relative overflow-hidden mt-[13px]">
        <div className="absolute right-[3px] top-0 w-[12px] h-[537px] bg-[#8a8a8a]" />
        <div className="flex items-center h-[36px] mt-[2px] text-[17px] text-[#dedede] whitespace-nowrap">
          <svg width="12" height="12" viewBox="0 0 12 12" fill="none" stroke="#ccc" strokeWidth="1.4" className="ml-[23px]">
            <path d="M1.5 4 6 8.5 10.5 4" />
          </svg>
          <Ico s={18} sw={1.3} stroke="#e0e0e0" className="ml-[9px]">
            <rect x="1" y="1" width="16" height="16" rx="3" />
            <path d="M1 6.5H17M1 11.5H17M6.5 1V17M11.5 1V17" />
          </Ico>
          <span className="ml-[9px]">Social_Media_Advert...</span>
        </div>
        <div className="-mt-[1.5px]">
          {FIELDS.map((f) => (
            <div key={f.n} className="flex items-center h-[36.6px] text-[17px] text-[#dedede] whitespace-nowrap">
              <div className="w-[66px] flex justify-end pr-[11px] shrink-0">
                {f.exp && (
                  <svg width="10" height="12" viewBox="0 0 10 12" fill="none" stroke="#ccc" strokeWidth="1.4">
                    <path d="M2.5 1.5 7.5 6 2.5 10.5" />
                  </svg>
                )}
              </div>
              <div className="w-[18px] h-[18px] rounded-[3px] border border-[#8a8a8a] shrink-0" />
              <div className="w-[17px] ml-[12px] flex items-center justify-center shrink-0"><FieldIcon t={f.i} /></div>
              <span className="ml-[11px]">{f.n}</span>
            </div>
          ))}
        </div>
      </div>
    </div>
  );
}

function StatusBar() {
  return (
    <div className="h-[36px] shrink-0 bg-[#121212] border-t border-[#5a5a5a] flex items-center pl-[6px] text-[16px] text-[#cfcfcf]">
      Page 1 of 1
      <div className="ml-auto flex items-center pr-[26px]">
        <span className="text-[18px] mr-[7px]">-</span>
        <div className="relative w-[153px] h-[2px] bg-[#d0d0d0] flex items-center">
          <div className="absolute left-[31px] w-[7px] h-[18px] bg-[#d5d5d5]" />
          <div className="absolute left-[76px] w-[1px] h-[9px] bg-[#d0d0d0]" />
        </div>
        <span className="ml-[8px] text-[21px] leading-[21px] font-semibold">+</span>
        <span className="ml-[19px] text-[18px]">51%</span>
        <Ico s={22} sw={1.6} stroke="#d5d5d5" className="ml-[30px]">
          <rect x="0.5" y="3" width="21" height="16" rx="2" />
          <path d="M7 7H4V10M15 7H18V10M7 15H4V12M15 15H18V12" />
        </Ico>
      </div>
    </div>
  );
}

function TaskIcon({ children, dot, active, badge }) {
  return (
    <div className={"w-[54.7px] h-[50px] relative flex items-center justify-center shrink-0 " + (active ? "bg-[#3c3430] rounded-md" : "")}>
      {children}
      {badge && (
        <div className="absolute right-[3px] top-[2px] min-w-[23px] h-[23px] px-[3px] rounded-full bg-[#22d3ee] text-[#111] text-[15px] leading-[23px] text-center">{badge}</div>
      )}
      {dot && <div className="absolute bottom-[0px] left-1/2 -translate-x-1/2 w-[7px] h-[3px] rounded-full bg-[#8a8a8a]" />}
      {active && <div className="absolute bottom-[0px] left-1/2 -translate-x-1/2 w-[20px] h-[4px] rounded-full bg-[#22e5f0]" />}
    </div>
  );
}

function Taskbar() {
  return (
    <div className="flex-1 bg-[#2d2421] border-t border-[#4a4442] flex items-center text-[#e8e8e8]">
      <div className="w-[584px] shrink-0 flex items-center pl-[25px]">
        <div className="relative w-[29px] h-[30px] bg-[#2f8f12] rounded-[3px] flex flex-col items-center justify-end pb-[4px] mt-[6px]">
          <div className="w-[9px] h-[11px] rounded-full bg-[#f0f0f0] mb-[2px]" />
          <div className="w-[17px] h-[2px] bg-[#c8ee8a]" />
          <div className="absolute -right-[5px] -top-[13px] w-[20px] h-[20px] rounded-full bg-[#ffa3ab] text-[#5a1c22] text-[13px] leading-[20px] text-center">1</div>
        </div>
        <div className="ml-[11px] flex flex-col text-[14.5px] leading-[20px] -mt-[2px]">
          <span>Watchlist</span>
          <span className="text-[#c5c5c5]">Ideas</span>
        </div>
      </div>
      <div className="w-[30px] h-[30px] grid grid-cols-2 gap-[2px] shrink-0">
        <div className="bg-[#5fd3f5]" />
        <div className="bg-[#3cc0f2]" />
        <div className="bg-[#28a8ee]" />
        <div className="bg-[#1d96e8]" />
      </div>
      <div className="ml-[16px] w-[276px] h-[40px] rounded-full bg-[#4b423e] flex items-center pl-[15px] shrink-0 relative">
        <Ico s={19} sw={2} stroke="#eee">
          <circle cx="8" cy="8" r="6.5" />
          <path d="M13 13 18 18" />
        </Ico>
        <span className="ml-[13px] text-[19px] text-[#ddd]">Search</span>
        <svg width="56" height="36" viewBox="0 0 56 36" className="absolute right-[9px] top-[2px]">
          <ellipse cx="28" cy="18" rx="27" ry="16" fill="#15110f" />
          <ellipse cx="28" cy="19" rx="24" ry="7" fill="#cfa36a" transform="rotate(-12 28 19)" />
          <ellipse cx="28" cy="19" rx="15" ry="3.5" fill="#15110f" transform="rotate(-12 28 19)" />
          <circle cx="27" cy="15" r="10" fill="#d8925a" />
          <path d="M5 25C18 25 40 19 50 12" stroke="#b98a55" strokeWidth="2.5" fill="none" />
        </svg>
      </div>
      <div className="ml-[3px] flex items-center">
        <TaskIcon><CopilotLogo id="cpb" w={29} h={29} /></TaskIcon>
        <TaskIcon>
          <svg width="30" height="30" viewBox="0 0 30 30">
            <circle cx="15" cy="15" r="15" fill="#0c66b5" />
            <path d="M1 12C3 3 11 0 16 0C24 0 30 6 30 15C30 20 26 21 22 20C16 19 20 15 18 12C16 8 5 6 1 12Z" fill="#3ad07e" />
            <path d="M12 29C6 27 6 18 13 16C12 22 17 28 26 25C22 29 17 30 12 29Z" fill="#37b7e8" />
          </svg>
        </TaskIcon>
        <TaskIcon dot>
          <svg width="30" height="30" viewBox="0 0 30 30">
            <circle cx="15" cy="15" r="15" fill="#f2c21b" />
            <path d="M15 15 2 7.5A15 15 0 0 1 28 7.5H15Z" fill="#e2453a" />
            <path d="M15 15 2 7.5A15 15 0 0 0 15 30L22 19Z" fill="#2fa84f" />
            <circle cx="15" cy="15" r="7.5" fill="#fff" />
            <circle cx="15" cy="15" r="5.8" fill="#2e7fe8" />
          </svg>
        </TaskIcon>
        <TaskIcon>
          <svg width="30" height="30" viewBox="0 0 30 30">
            <path d="M12 0H18L19 5 24 2 28 8 24 11V19L28 22 24 28 19 25 18 30H12L11 25 6 28 2 22 6 19V11L2 8 6 2 11 5Z" fill="#7b8794" />
            <circle cx="15" cy="15" r="7" fill="#dfe5ea" />
            <circle cx="15" cy="15" r="4.5" fill="#1560a8" />
          </svg>
        </TaskIcon>
        <TaskIcon badge="8">
          <svg width="28" height="30" viewBox="0 0 28 30">
            <rect x="6" y="2" width="20" height="24" rx="2" fill="#1276c9" />
            <rect x="12" y="12" width="12" height="16" fill="#0a5aa8" />
            <rect x="0" y="6" width="16" height="16" rx="2" fill="#28a8ea" />
          </svg>
        </TaskIcon>
        <TaskIcon>
          <svg width="30" height="32" viewBox="0 0 30 32">
            <path d="M8 8C8 0 22 0 22 8" stroke="#2aa8e8" strokeWidth="2" fill="none" />
            <rect x="1" y="7" width="28" height="24" rx="3" fill="#f4f4f4" />
            <rect x="9" y="11" width="5.5" height="5.5" fill="#e8512e" />
            <rect x="15.5" y="11" width="5.5" height="5.5" fill="#7fb800" />
            <rect x="9" y="17.5" width="5.5" height="5.5" fill="#00a4ef" />
            <rect x="15.5" y="17.5" width="5.5" height="5.5" fill="#ffb900" />
          </svg>
        </TaskIcon>
        <TaskIcon dot badge="33">
          <svg width="30" height="30" viewBox="0 0 30 30" fill="none">
            <path d="M2 28 4 20C-1 10 7 2 15 2C23 2 28 8 28 15C28 24 19 30 10 26Z" stroke="#2dc75f" strokeWidth="2.6" />
            <path d="M10 9C8 14 15 21 21 20L22 17 18 15 16 17C14 16 13 14 12 13L14 11 12 8Z" fill="#2dc75f" />
          </svg>
        </TaskIcon>
        <TaskIcon active>
          <svg width="26" height="34" viewBox="0 0 26 34">
            <rect x="16" y="0" width="10" height="31" rx="1" fill="#e0a40e" />
            <rect x="8" y="9" width="10" height="22" rx="1" fill="#f2c83e" />
            <rect x="0" y="17" width="10" height="14" rx="1" fill="#f7dc7c" />
          </svg>
        </TaskIcon>
      </div>
      <div className="ml-auto flex items-center pr-[24px]">
        <svg width="16" height="10" viewBox="0 0 16 10" fill="none" stroke="#eee" strokeWidth="2">
          <path d="M1.5 8.5 8 2 14.5 8.5" />
        </svg>
        <div className="ml-[22px] flex flex-col items-center text-[16px] leading-[20px]">
          <span>ENG</span>
          <span>IN</span>
        </div>
        <Ico s={20} sw={1.6} stroke="#eee" className="ml-[22px]">
          <path d="M1 7C6 2 14 2 19 7M4 10.5C8 7 12 7 16 10.5M7 14C9 12.5 11 12.5 13 14" />
          <circle cx="10" cy="17" r="1" fill="#eee" />
        </Ico>
        <Ico s={20} sw={1.4} stroke="#eee" className="ml-[10px]">
          <path d="M1 7H5L10 3V17L5 13H1Z M13 6C15 8 15 12 13 14M16 4C19 7 19 13 16 16" />
        </Ico>
        <div className="ml-[11px] w-[19px] h-[13px] border border-[#eee] rounded-[3px] p-[1.5px] relative">
          <div className="w-[8px] h-full bg-[#eee] rounded-[1px]" />
        </div>
        <div className="ml-[21px] flex flex-col items-end text-[14.5px] leading-[20px] -mt-[3px]">
          <span>10:23</span>
          <span>21-Sep-25</span>
        </div>
      </div>
    </div>
  );
}

export default function App() {
  return (
    <div className="w-[1919px] h-[1079px] overflow-hidden bg-[#121212] flex flex-col font-['Noto_Sans','Open_Sans',sans-serif]">
      <TitleBar />
      <TabsBar />
      <Ribbon />
      <div className="h-[725px] flex shrink-0">
        <NavRail />
        <div className="w-[1310px] shrink-0 flex flex-col">
          <div className="flex-1 flex min-h-0">
            <Canvas />
            <FiltersPanel />
          </div>
          <PageTabs />
        </div>
        <VizPanel />
        <DataPanel />
      </div>
      <StatusBar />
      <Taskbar />
    </div>
  );
}
